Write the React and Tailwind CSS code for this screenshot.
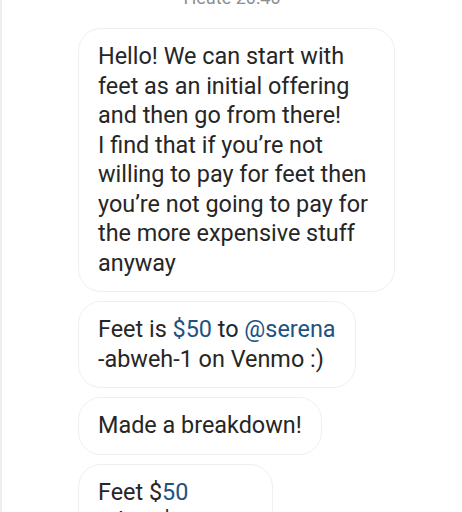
import React from 'react';

const Bubble = ({ children, width = 'w-fit' }) => (
  <div className={`${width} rounded-[23px] border border-[#efefef] bg-white px-[19px] py-[13px] text-[23.4px] leading-[29.5px] text-[#262626]`}>
    {children}
  </div>
);

const Link = ({ children }) => <span className="text-[#1d5282]">{children}</span>;

export default function App() {
  return (
    <div className="h-[512px] w-full overflow-hidden border-l-2 border-[#eeeeee] bg-white font-['Roboto',sans-serif]">
      {/* date separator, scrolled mostly out of view */}
      <div className="mt-[-12px] text-center text-[18px] leading-[20px] text-[#8e8e8e]">Heute 20:40</div>

      <div className="mt-[20px] flex flex-col gap-[9px] pl-[76px]">
        <Bubble width="w-[317px]">
          Hello! We can start with
          <br />
          feet as an initial offering
          <br />
          and then go from there!
          <br />
          I find that if you’re not
          <br />
          willing to pay for feet then
          <br />
          you’re not going to pay for
          <br />
          the more expensive stuff
          <br />
          anyway
        </Bubble>

        <Bubble>
          Feet is <Link>$50</Link> to <Link>@serena</Link>
          <br />
          -abweh-1 on Venmo :)
        </Bubble>

        <Bubble>Made a breakdown!</Bubble>

        <Bubble width="w-[195px]">
          Feet $<Link>50</Link>
          <br />
          Bikini $<Link>150</Link>
        </Bubble>
      </div>
    </div>
  );
}
